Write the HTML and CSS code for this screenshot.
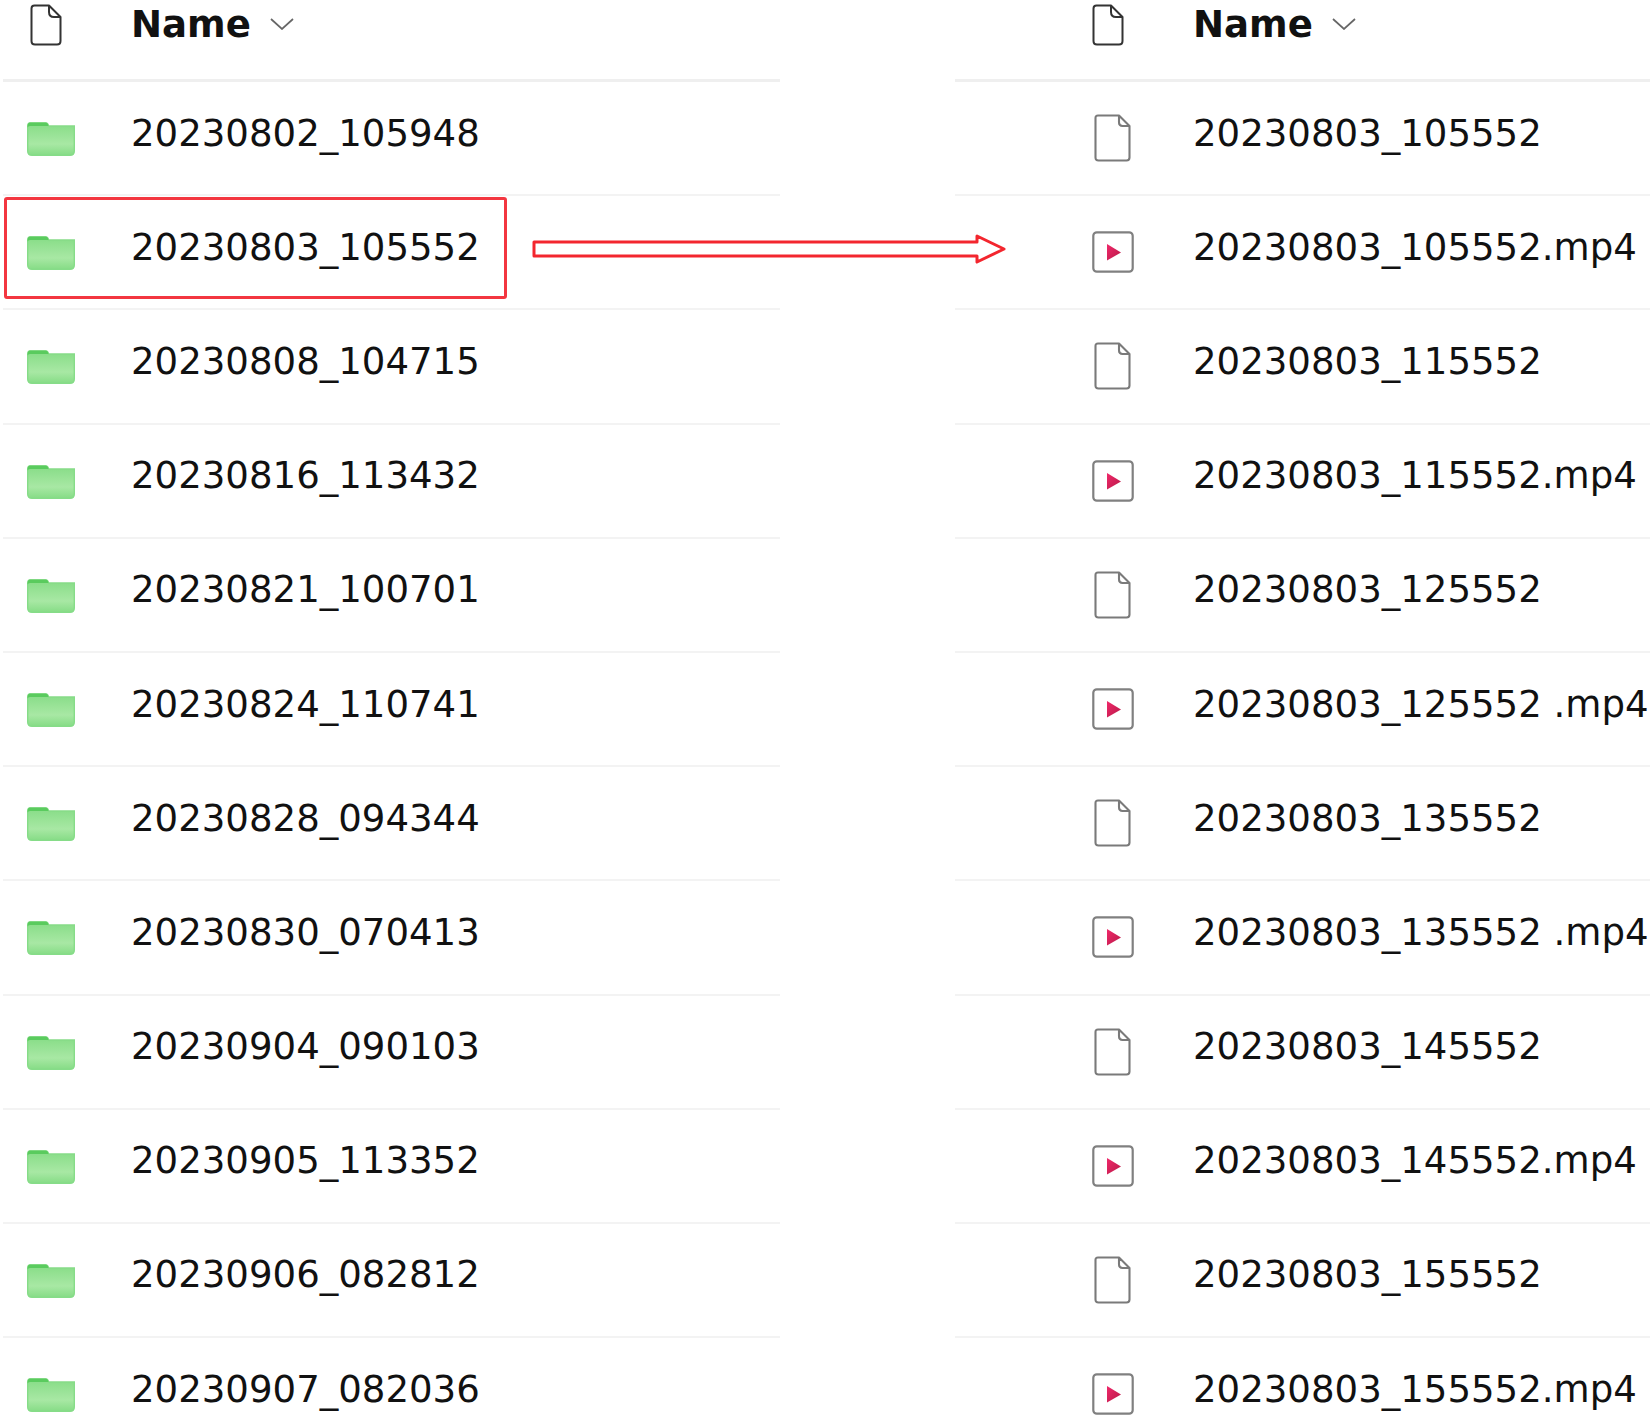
FILE: index.html
```html
<!DOCTYPE html>
<html>
<head>
    <title>Folder and file listing</title>
    <link rel="stylesheet" href="styles.css">
</head>
<body>
    <svg class="defs" width="0" height="0">
        <defs>
            <linearGradient id="folderFill" x1="0" y1="0" x2="0" y2="1">
                <stop offset="0" stop-color="#86dc86"/>
                <stop offset="0.65" stop-color="#a8e8a4"/>
                <stop offset="1" stop-color="#86dc86"/>
            </linearGradient>
            <linearGradient id="playFill" x1="0" y1="0" x2="1" y2="1">
                <stop offset="0" stop-color="#f0286a"/>
                <stop offset="1" stop-color="#b81a48"/>
            </linearGradient>
            <symbol id="folder" viewBox="0 0 48 34">
                <path d="M0.7 4 Q0.7 1 3 1 H19 Q21 1 21.5 4 H47.3 V29 Q47.3 33.3 43 33.3 H5 Q0.7 33.3 0.7 29 Z" fill="url(#folderFill)" stroke="#86dc88" stroke-width="1.4"/>
                <path d="M0.5 5.5 Q0.5 0.5 3 0.5 H18.5 Q21 0.5 21.5 4 H3 Q1 4 0.5 5.5 Z" fill="#5acb5e"/>
            </symbol>
            <symbol id="file" viewBox="0 0 37 48">
                <path d="M4 1.5 H25 L35.5 12 V43.5 Q35.5 46.5 32.5 46.5 H4.5 Q1.5 46.5 1.5 43.5 V4 Q1.5 1.5 4 1.5 Z M25 1.5 V8.5 Q25 12 28.5 12 H35.5" fill="#fff" stroke="#7a7a7a" stroke-width="2.1" stroke-linejoin="round"/>
            </symbol>
            <symbol id="video" viewBox="0 0 42 42">
                <rect x="1.3" y="1.3" width="39.4" height="39.4" rx="3.5" fill="#fff" stroke="#808080" stroke-width="2.2"/>
                <path d="M15 13 L29 21.5 L15 29.5 Z" fill="url(#playFill)"/>
            </symbol>
            <symbol id="head-file" viewBox="0 0 32 42">
                <path d="M4.5 1.5 H19 L30.5 13 V37 Q30.5 40.5 27 40.5 H5 Q1.5 40.5 1.5 37 V4.5 Q1.5 1.5 4.5 1.5 Z M19 1.5 V8 Q19 13 24 13 H30.5" fill="#fff" stroke="#333" stroke-width="2" stroke-linejoin="round"/>
            </symbol>
            <symbol id="chevron" viewBox="0 0 24 12">
                <path d="M1 1 L12 11 L23 1" fill="none" stroke="#666" stroke-width="1.7"/>
            </symbol>
        </defs>
    </svg>

    <div class="page">
        <div class="list list-folders">
            <div class="row head">
                <svg class="icon icon-head"><use href="#head-file"/></svg>
                <span class="name">Name <svg class="chevron"><use href="#chevron"/></svg></span>
            </div>
            <div class="row"><svg class="icon icon-folder"><use href="#folder"/></svg><span class="name">20230802_105948</span></div>
            <div class="row"><svg class="icon icon-folder"><use href="#folder"/></svg><span class="name">20230803_105552</span></div>
            <div class="row"><svg class="icon icon-folder"><use href="#folder"/></svg><span class="name">20230808_104715</span></div>
            <div class="row"><svg class="icon icon-folder"><use href="#folder"/></svg><span class="name">20230816_113432</span></div>
            <div class="row"><svg class="icon icon-folder"><use href="#folder"/></svg><span class="name">20230821_100701</span></div>
            <div class="row"><svg class="icon icon-folder"><use href="#folder"/></svg><span class="name">20230824_110741</span></div>
            <div class="row"><svg class="icon icon-folder"><use href="#folder"/></svg><span class="name">20230828_094344</span></div>
            <div class="row"><svg class="icon icon-folder"><use href="#folder"/></svg><span class="name">20230830_070413</span></div>
            <div class="row"><svg class="icon icon-folder"><use href="#folder"/></svg><span class="name">20230904_090103</span></div>
            <div class="row"><svg class="icon icon-folder"><use href="#folder"/></svg><span class="name">20230905_113352</span></div>
            <div class="row"><svg class="icon icon-folder"><use href="#folder"/></svg><span class="name">20230906_082812</span></div>
            <div class="row"><svg class="icon icon-folder"><use href="#folder"/></svg><span class="name">20230907_082036</span></div>
        </div>

        <div class="list list-files">
            <div class="row head">
                <svg class="icon icon-head"><use href="#head-file"/></svg>
                <span class="name">Name <svg class="chevron"><use href="#chevron"/></svg></span>
            </div>
            <div class="row"><svg class="icon icon-file"><use href="#file"/></svg><span class="name">20230803_105552</span></div>
            <div class="row"><svg class="icon icon-video"><use href="#video"/></svg><span class="name">20230803_105552.mp4</span></div>
            <div class="row"><svg class="icon icon-file"><use href="#file"/></svg><span class="name">20230803_115552</span></div>
            <div class="row"><svg class="icon icon-video"><use href="#video"/></svg><span class="name">20230803_115552.mp4</span></div>
            <div class="row"><svg class="icon icon-file"><use href="#file"/></svg><span class="name">20230803_125552</span></div>
            <div class="row"><svg class="icon icon-video"><use href="#video"/></svg><span class="name">20230803_125552 .mp4</span></div>
            <div class="row"><svg class="icon icon-file"><use href="#file"/></svg><span class="name">20230803_135552</span></div>
            <div class="row"><svg class="icon icon-video"><use href="#video"/></svg><span class="name">20230803_135552 .mp4</span></div>
            <div class="row"><svg class="icon icon-file"><use href="#file"/></svg><span class="name">20230803_145552</span></div>
            <div class="row"><svg class="icon icon-video"><use href="#video"/></svg><span class="name">20230803_145552.mp4</span></div>
            <div class="row"><svg class="icon icon-file"><use href="#file"/></svg><span class="name">20230803_155552</span></div>
            <div class="row"><svg class="icon icon-video"><use href="#video"/></svg><span class="name">20230803_155552.mp4</span></div>
        </div>

        <!-- red callout drawn over the list -->
        <div class="callout-box"></div>
        <svg class="callout-arrow" viewBox="0 0 476 32">
            <path d="M3 9 H446 V3 L473 16 L446 29 V23 H3 Z" fill="#fff" stroke="#f3262e" stroke-width="3" stroke-linejoin="round"/>
        </svg>
    </div>
</body>
</html>
```

FILE: styles.css
```css
html, body {
    margin: 0;
    height: 100%;
    background-color: #fff;
    overflow: hidden;
}

.defs {
    position: absolute;
}

.page {
    position: relative;
    display: flex;
    height: 1418px;
    overflow: hidden;
    font-family: "DejaVu Sans", sans-serif;
    font-size: 37.1px;
    color: #111;
}

.list-folders {
    width: 777px;
    margin-left: 3px;
    margin-right: 175px;
}

.list-files {
    width: 695px;
}

.row {
    display: grid;
    align-items: center;
    height: 114.2px;
    box-sizing: border-box;
    border-bottom: 2px solid #f3f3f3;
    white-space: nowrap;
    padding-bottom: 10px;
}

.list-folders .row {
    grid-template-columns: 128px 1fr;
}

.list-files .row {
    grid-template-columns: 238px 1fr;
}

.head {
    height: 82px;
    padding-bottom: 30px;
    border-bottom-width: 3px;
    border-bottom-color: #efefef;
    font-weight: bold;
}

.chevron {
    width: 24px;
    height: 12px;
    margin-left: 6px;
    vertical-align: 7px;
}

.icon {
    display: block;
}

.icon-head {
    width: 32px;
    height: 42px;
}

.list-folders .icon-head {
    margin-left: 27px;
}

.list-files .icon-head {
    margin-left: 137px;
}

.icon-folder {
    width: 48px;
    height: 34px;
    margin-left: 24px;
    transform: translateY(6px);
}

.icon-file {
    width: 37px;
    height: 48px;
    margin-left: 139px;
    transform: translateY(5px);
}

.icon-video {
    width: 42px;
    height: 42px;
    margin-left: 137px;
    transform: translateY(5px);
}

.callout-box {
    position: absolute;
    left: 4px;
    top: 197px;
    width: 503px;
    height: 102px;
    box-sizing: border-box;
    border: 3px solid #f33640;
    border-radius: 3px;
}

.callout-arrow {
    position: absolute;
    left: 531px;
    top: 233px;
    width: 476px;
    height: 32px;
}
```
